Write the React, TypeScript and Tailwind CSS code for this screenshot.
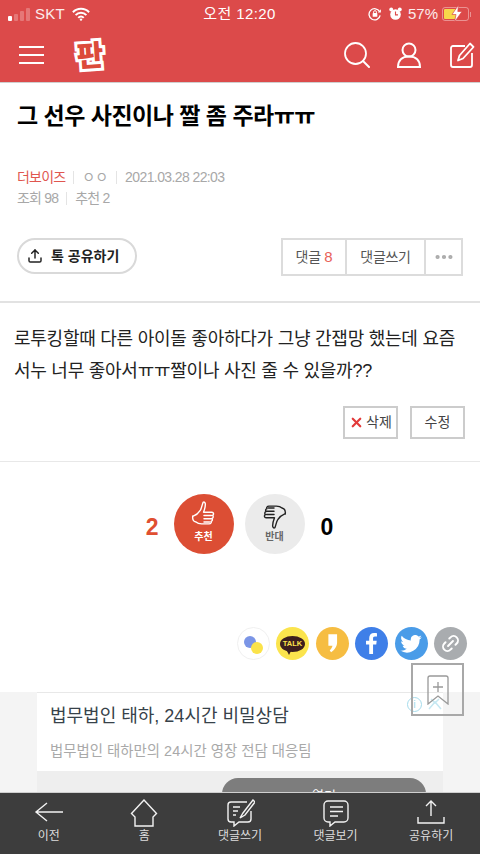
import { Ellipsis, Link2, Upload, X } from 'lucide-react';

const FONT = '"Liberation Sans", "Noto Sans CJK KR", sans-serif';

function StatusBar() {
  return (
    <div className="flex h-[26px] items-center justify-between pl-[8px] pr-[9px] pt-[2px] text-[15px] text-white/90">
      <div className="flex w-[150px] items-center">
        <div className="flex items-end gap-[2px]">
          <span className="h-[5px] w-[4px] rounded-[1px] bg-white" />
          <span className="h-[7px] w-[4px] rounded-[1px] bg-white/25" />
          <span className="h-[10px] w-[4px] rounded-[1px] bg-white/25" />
          <span className="h-[13px] w-[4px] rounded-[1px] bg-white/25" />
        </div>
        <span className="ml-[5px] tracking-[0.3px]">SKT</span>
        <svg width="18" height="14" viewBox="0 0 20 15" className="ml-[7px]">
          <path d="M1 5.500a12.500 12.500 0 0 1 18 0M4 8.800a8.300 8.300 0 0 1 12 0M7 11.700a4 4 0 0 1 6 0" fill="none" stroke="#fff" strokeWidth="2.200" />
          <circle cx="10" cy="13.700" r="1.300" fill="#fff" />
        </svg>
      </div>
      <span className="text-[15px] tracking-[0.4px] text-white">오전 12:20</span>
      <div className="flex w-[150px] items-center justify-end">
        <svg width="14" height="14" viewBox="0 0 15 15" className="mr-[7px]">
          <path d="M13 9a6 6 0 1 1-.6-4" fill="none" stroke="#fff" strokeWidth="1.400" />
          <path d="M13.800 2.500v3.400h-3.300z" fill="#fff" />
          <rect x="5" y="6.500" width="5" height="4" rx=".7" fill="#fff" />
          <path d="M6 6.500V5.400a1.500 1.500 0 0 1 3 0v1.100" fill="none" stroke="#fff" />
        </svg>
        <svg width="13" height="14" viewBox="0 0 14 15" className="mr-[6px]">
          <circle cx="7" cy="8" r="5.700" fill="#fff" />
          <circle cx="2.400" cy="2.600" r="2.100" fill="#fff" />
          <circle cx="11.600" cy="2.600" r="2.100" fill="#fff" />
          <path d="M7 4.800v3.600h2.700" fill="none" stroke="#dc4a4a" strokeWidth="1.200" />
        </svg>
        <span className="text-[15px] text-white/90">57%</span>
        <div className="relative ml-[4px] h-[14px] w-[27px] rounded-[3px] border border-white/40 p-[1px]">
          <div className="h-full w-[12px] rounded-[1px] bg-[#f7d84a]" />
          <svg width="12" height="17" viewBox="0 0 12 17" className="absolute left-[8px] top-[-3px]">
            <path d="M7.500 0 1 9.500h4L3.500 17 11 6.500H6.800z" fill="#fff" stroke="#dc4a4a" strokeWidth=".7" />
          </svg>
        </div>
        <span className="ml-[1px] h-[5px] w-[1px] bg-white/40" />
      </div>
    </div>
  );
}

function NavBar() {
  return (
    <div className="flex h-[57px] items-center justify-between border-b border-[#cfcfcf] pl-[19px] pr-[5px] pt-[1px]">
      <div className="flex items-center">
        <div className="flex w-[25px] flex-col gap-[6px]">
          <span className="h-[2px] bg-white" />
          <span className="h-[2px] bg-white" />
          <span className="h-[2px] bg-white" />
        </div>
        <svg width="36" height="36" viewBox="0 0 36 36" className="ml-[28px] rotate-[-4deg]">
          <text
            x="18"
            y="29"
            textAnchor="middle"
            fontSize="29"
            fontWeight="900"
            fill="#dc4a3a"
            stroke="#fff"
            strokeWidth="6"
            strokeLinejoin="miter"
            paintOrder="stroke"
            fontFamily={FONT}
          >
            판
          </text>
        </svg>
      </div>
      <div className="mt-[1px] flex items-center">
        <svg width="26" height="26" viewBox="0 0 26 26" fill="none" stroke="#fff" strokeWidth="1.800" strokeLinecap="round" className="mr-[26px]">
          <circle cx="11.500" cy="11.500" r="10.500" />
          <path d="m19 19 6 6" strokeWidth="2" />
        </svg>
        <svg width="26" height="26" viewBox="0 0 26 26" fill="none" stroke="#fff" strokeWidth="2" className="mr-[28px]">
          <circle cx="13" cy="8" r="6.500" />
          <path d="M2 25c0-6.500 4-10.500 11-10.500s11 4 11 10.500z" />
        </svg>
        <svg width="25" height="26" viewBox="0 0 25 26" fill="none" stroke="#fff" strokeWidth="1.800" strokeLinejoin="round">
          <path d="M15 4H3a2 2 0 0 0-2 2v17a2 2 0 0 0 2 2h17a2 2 0 0 0 2-2V11" />
          <path d="m20 1.500 3.500 3.500-10.500 11.500-5 2 1.500-5z" />
        </svg>
      </div>
    </div>
  );
}

function MetaSep() {
  return <span className="mx-[8px] h-[13px] w-[1px] bg-[#e4e4e4]" />;
}

function ThumbIcon({ color, down }: { color: string; down?: boolean }) {
  return (
    <svg width="27" height="28" viewBox="0 0 27 30" fill="none" stroke={color} strokeWidth="1.500" strokeLinejoin="round" strokeLinecap="round" className={down ? 'rotate-180' : ''}>
      <path d="M3 16c3-1 5-3 7-6 1.500-2 2-6 3-8.500 1.500-1 2.500.5 2.500 2 0 3-1 6-2 8.500h9c2 0 2.500 3 .5 3.500 1.500.8 1 3-.5 3.300 1 1 .5 2.700-1 3 .8 1 0 2.700-2 2.700h-8c-3 0-5-1-6-2-2.500-.5-4-3-3.500-6.500z" />
      <path d="M14 15.500h8M14 19h8M14 22.500h6" />
    </svg>
  );
}

function SocialIcons() {
  return (
    <div className="mt-[73px] flex justify-end gap-[6.500px] pr-[13px]">
      <div className="relative h-[33px] w-[33px] rounded-full border border-[#f0f0f0] bg-white">
        <span className="absolute left-[6px] top-[8px] h-[12px] w-[12px] rounded-full bg-[#7b95e6]" />
        <span className="absolute left-[13px] top-[14px] h-[12px] w-[12px] rounded-full bg-[#fbe34a]" />
      </div>
      <div className="flex h-[33px] w-[33px] items-center justify-center rounded-full bg-[#fbe44d]">
        <div className="relative flex h-[16px] w-[25px] items-center justify-center rounded-[50%] bg-[#3c1e1e] text-[7.500px] font-bold text-[#fbe44d]">
          TALK
          <span className="absolute bottom-[-3px] left-[7px] h-0 w-0 border-x-[2px] border-t-[4px] border-x-transparent border-t-[#3c1e1e]" />
        </div>
      </div>
      <div className="flex h-[33px] w-[33px] items-center justify-center rounded-full bg-[#f6bd42]">
        <svg width="11" height="19" viewBox="0 0 12 20">
          <path d="M1.500 0H11v9c0 4-2.500 8-6.500 10.500L3 17.500c1.500-1.500 2.500-3 3-5H1.500z" fill="#fff" />
        </svg>
      </div>
      <div className="flex h-[33px] w-[33px] items-center justify-center rounded-full bg-[#3f7fe8]">
        <svg width="11" height="21" viewBox="0 0 12 23">
          <path d="M3.500 23V12.700H0V8.600h3.500V5.600C3.500 2 5.600 0 8.800 0c1.300 0 2.500.1 3.200.2v3.600H9.800C8.100 3.800 7.700 4.700 7.700 5.900v2.700h4l-.5 4.100H7.700V23z" fill="#fff" />
        </svg>
      </div>
      <div className="flex h-[33px] w-[33px] items-center justify-center rounded-full bg-[#4a9ce8]">
        <svg width="22" height="18" viewBox="0 0 24 20">
          <path d="M24 2.400c-.9.400-1.800.7-2.800.8 1-.6 1.800-1.500 2.200-2.700-1 .6-2 1-3.100 1.200A4.900 4.900 0 0 0 11.900 6.200C7.800 6 4.200 4 1.700.9c-1.300 2.200-.7 5.100 1.500 6.600-.8 0-1.600-.2-2.200-.6 0 2.400 1.700 4.400 3.900 4.900-.7.200-1.500.2-2.200.1.600 2 2.400 3.400 4.600 3.400A9.900 9.900 0 0 1 0 17.300 14 14 0 0 0 21.500 4.900c1-.7 1.800-1.500 2.500-2.500z" fill="#fff" />
        </svg>
      </div>
      <div className="flex h-[33px] w-[33px] items-center justify-center rounded-full bg-[#a9acaf]">
        <Link2 size={21} color="#fff" strokeWidth={2.200} className="rotate-[-45deg]" />
      </div>
    </div>
  );
}

function Ad() {
  return (
    <div className="relative mt-[32px] h-[140px] overflow-hidden bg-[#f4f4f4] px-[37px]">
      <div className="h-[79px] border-t border-[#e8e8e8] bg-white px-[13px] pt-[7px]">
        <div className="text-[18px] leading-[32px] text-[#37424a]">법무법인 태하, 24시간 비밀상담</div>
        <div className="mt-[9px] text-[14.400px] leading-[20px] tracking-[0.02px] text-[#a9a9a9]">법무법인 태하만의 24시간 영장 전담 대응팀</div>
      </div>
      <div className="flex h-[61px] justify-end bg-[#eeeeee] pr-[17px] pt-[7px]">
        <div className="h-[40px] w-[204px] rounded-[16px] bg-[#7d7d7d] pt-[8px] text-center text-[13px] text-white">열기</div>
      </div>
      <div className="absolute left-[407px] top-[5px] flex h-[15px] w-[15px] items-center justify-center rounded-full border border-[#a5dcec] text-[11px] leading-none text-[#a5dcec]">i</div>
      <svg width="14" height="12" viewBox="0 0 14 12" fill="none" stroke="#c6e8f2" strokeWidth="1.500" className="absolute left-[428px] top-[6px]">
        <path d="M1 11 7 4l6 7M3 1l4 4 4-4" />
      </svg>
    </div>
  );
}

const BOTTOM_ICONS: Record<string, React.ReactNode> = {
  이전: <path d="M13 4 2 13l11 9M2 13h27" />,
  홈: <path d="M15 1 2.500 14.500 6 18V27H24V18l3.500-3.500z" />,
  댓글쓰기: (
    <>
      <path d="M22 3H6a3 3 0 0 0-3 3v14a3 3 0 0 0 3 3h3v4l5-4h9a3 3 0 0 0 3-3v-8" />
      <path d="M28 1 18 14l-3 5 5-3L30 3zM8 8h7M8 12h5M8 16h3" />
    </>
  ),
  댓글보기: <path d="M7 2h16a4 4 0 0 1 4 4v13a4 4 0 0 1-4 4h-9l-5 4v-4H7a4 4 0 0 1-4-4V6a4 4 0 0 1 4-4zM9 8h13M9 12.500h13M9 17h8" />,
  공유하기: <path d="M15 17V2M10 7l5-5 5 5M2 18v6h26v-6" />,
};

function BottomBar() {
  return (
    <div className="fixed bottom-0 left-0 flex h-[62px] w-[480px] border-t border-[#cfcfcf] bg-[#3d3d3d] px-[1px]">
      {Object.entries(BOTTOM_ICONS).map(([label, icon]) => (
        <div key={label} className="flex flex-1 flex-col items-center pt-[6px]">
          <svg width="30" height="28" viewBox="0 0 30 28" fill="none" stroke="#f2f2f2" strokeWidth="1.400">
            {icon}
          </svg>
          <span className="mt-[1px] text-[12px] leading-[16px] text-[#dddddd]">{label}</span>
        </div>
      ))}
    </div>
  );
}

export default function App() {
  return (
    <div className="relative h-[854px] w-[480px] overflow-hidden bg-white" style={{ fontFamily: FONT }}>
      <div className="bg-[#dc4a4a]">
        <StatusBar />
        <NavBar />
      </div>

      <h1 className="mt-[17px] px-[17px] text-[23px] font-bold leading-[32px] tracking-[-0.5px] text-black">
        그 선우 사진이나 짤 좀 주라ㅠㅠ
      </h1>

      <div className="mt-[35px] px-[17px] text-[14px] leading-[21px] tracking-[-0.8px] text-[#a8a8a8]">
        <div className="flex items-center">
          <span className="text-[#e0564f]">더보이즈</span>
          <MetaSep />
          <span className="tracking-[0px]">ㅇㅇ</span>
          <MetaSep />
          <span className="tracking-[-0.6px]">2021.03.28 22:03</span>
        </div>
        <div className="flex items-center">
          <span>조회 98</span>
          <MetaSep />
          <span>추천 2</span>
        </div>
      </div>

      <div className="mt-[29px] flex items-start justify-between border-b-2 border-[#e2e2e2] pb-[25px] pl-[17px] pr-[17px]">
        <button className="flex h-[36px] w-[120px] items-center gap-[8px] rounded-full border-2 border-[#d9d9d9] pl-[8px] text-[14px] font-bold text-[#222]">
          <Upload size={16} strokeWidth={2.200} />톡 공유하기
        </button>
        <div className="flex h-[38px] w-[182px] border-2 border-[#dcdcdc] text-[14px] tracking-[-0.3px] text-[#555]">
          <span className="flex w-[64px] items-center justify-center border-r-2 border-[#dcdcdc]">
            댓글&nbsp;<span className="text-[15px] text-[#e8615a]">8</span>
          </span>
          <span className="flex w-[79px] items-center justify-center border-r-2 border-[#dcdcdc]">댓글쓰기</span>
          <span className="flex flex-1 items-center justify-center text-[#aaaaaa]">
            <Ellipsis size={22} strokeWidth={2.600} />
          </span>
        </div>
      </div>

      <p className="mt-[20px] pl-[14px] pr-[10px] text-[18px] leading-[32px] tracking-[-0.25px] text-[#222]">
        로투킹할때 다른 아이돌 좋아하다가 그냥 간잽망 했는데 요즘
        <br />
        서누 너무 좋아서ㅠㅠ짤이나 사진 줄 수 있을까??
      </p>

      <div className="mt-[19px] flex justify-end gap-[12px] border-b border-[#e8e8e8] pb-[22px] pr-[15px] text-[14px] text-[#444]">
        <button className="flex h-[33px] w-[55px] items-center justify-center border-2 border-[#cccccc]">
          <X size={15} strokeWidth={3.500} color="#e23a3a" className="mr-[2px]" />삭제
        </button>
        <button className="flex h-[33px] w-[55px] items-center justify-center border-2 border-[#cccccc]">수정</button>
      </div>

      <div className="mt-[32px] flex items-center justify-center pr-[1px]">
        <span className="mr-[15px] mt-[6px] text-[23px] font-bold text-[#e04f31]">2</span>
        <div className="flex h-[60px] w-[60px] flex-col items-center rounded-full bg-[#dc4e34] pt-[7px]">
          <ThumbIcon color="#fff" />
          <span className="mt-[1px] text-[10px] font-bold leading-[14px] text-white">추천</span>
        </div>
        <div className="ml-[11px] flex h-[60px] w-[60px] flex-col items-center rounded-full bg-[#ebebeb] pt-[7px]">
          <ThumbIcon color="#222" down />
          <span className="mt-[1px] text-[10px] font-bold leading-[14px] text-[#666]">반대</span>
        </div>
        <span className="ml-[16px] mt-[6px] text-[23px] font-bold text-black">0</span>
      </div>

      <SocialIcons />
      <Ad />

      {/* floating bookmark button */}
      <div className="absolute left-[411px] top-[663px] flex h-[53px] w-[53px] items-center justify-center border-2 border-[#a8a8a8]">
        <svg width="22" height="30" viewBox="0 0 22 30" fill="none" stroke="#999" strokeWidth="1.300">
          <path d="M1 29V3a2 2 0 0 1 2-2h16a2 2 0 0 1 2 2v26l-10-8zM11 7v10M6 12h10" />
        </svg>
      </div>

      <BottomBar />
    </div>
  );
}
